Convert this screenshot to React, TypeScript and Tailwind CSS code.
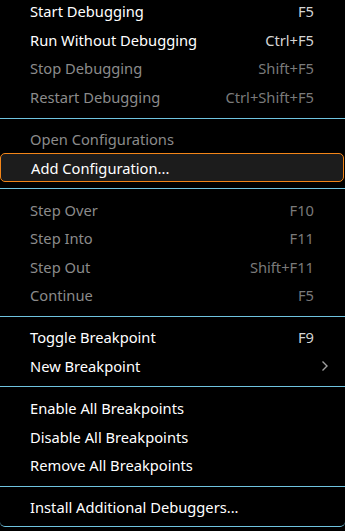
import React from "react";

type Item =
  | { type: "sep" }
  | { type: "item"; label: string; shortcut?: string; disabled?: boolean; active?: boolean; submenu?: boolean };

const items: Item[] = [
  { type: "item", label: "Start Debugging", shortcut: "F5" },
  { type: "item", label: "Run Without Debugging", shortcut: "Ctrl+F5" },
  { type: "item", label: "Stop Debugging", shortcut: "Shift+F5", disabled: true },
  { type: "item", label: "Restart Debugging", shortcut: "Ctrl+Shift+F5", disabled: true },
  { type: "sep" },
  { type: "item", label: "Open Configurations", disabled: true },
  { type: "item", label: "Add Configuration...", active: true },
  { type: "sep" },
  { type: "item", label: "Step Over", shortcut: "F10", disabled: true },
  { type: "item", label: "Step Into", shortcut: "F11", disabled: true },
  { type: "item", label: "Step Out", shortcut: "Shift+F11", disabled: true },
  { type: "item", label: "Continue", shortcut: "F5", disabled: true },
  { type: "sep" },
  { type: "item", label: "Toggle Breakpoint", shortcut: "F9" },
  { type: "item", label: "New Breakpoint", submenu: true },
  { type: "sep" },
  { type: "item", label: "Enable All Breakpoints" },
  { type: "item", label: "Disable All Breakpoints" },
  { type: "item", label: "Remove All Breakpoints" },
  { type: "sep" },
  { type: "item", label: "Install Additional Debuggers..." },
];

function Row({ item }: { item: Extract<Item, { type: "item" }> }) {
  const labelColor = item.disabled ? "text-[#8b8b8b]" : "text-white";
  const scColor = item.disabled ? "text-[#7a7a7a]" : "text-[#d4d4d4]";
  return (
    <div
      className={
        "relative flex items-center h-[28.6px] pl-[30px] pr-[31px] " +
        (item.active ? "bg-[#1c1c1c] border border-[#f38518] rounded-[5px] pl-[29px] mr-[1px]" : "")
      }
    >
      <span className={"flex-1 whitespace-nowrap " + labelColor}>{item.label}</span>
      {item.shortcut && <span className={"whitespace-nowrap " + scColor}>{item.shortcut}</span>}
      {item.submenu && (
        <svg
          className="absolute right-[16px] top-1/2 -translate-y-1/2"
          width="8"
          height="12"
          viewBox="0 0 8 12"
          fill="none"
        >
          <path d="M1.5 1.5 L6 6 L1.5 10.5" stroke="#a0a0a0" strokeWidth="1.4" />
        </svg>
      )}
    </div>
  );
}

export default function App() {
  return (
    <div
      className="w-[345px] h-[531px] bg-black overflow-hidden text-[14.7px]"
      style={{ fontFamily: '"Noto Sans", "Open Sans", sans-serif' }}
    >
      <div className="mt-[-3px] pb-[5px] border-b border-[#6fc3df] rounded-b-[5px]">
        {items.map((it, i) =>
          it.type === "sep" ? (
            <div key={i} className="h-[13.4px] flex items-center">
              <div className="w-full h-px bg-[#6fc3df]" />
            </div>
          ) : (
            <Row key={i} item={it} />
          )
        )}
      </div>
    </div>
  );
}
